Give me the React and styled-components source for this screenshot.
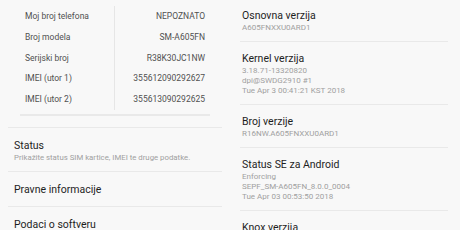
import styled, { createGlobalStyle } from "styled-components"

const GlobalStyle = createGlobalStyle`
  html, body {
    margin: 0;
    padding: 0;
    background: #f8f8f8;
  }
  body {
    font-family: Roboto, "Liberation Sans", sans-serif;
    -webkit-font-smoothing: antialiased;
  }
`

const Screen = styled.div`
  display: grid;
  grid-template-columns: 230px 230px;
  width: 460px;
  height: 230px;
  overflow: hidden;
  background: #f8f8f8;
`

const Panel = styled.div`
  display: flex;
  flex-direction: column;
`

const InfoCard = styled.div`
  margin: 0 20px;
  padding: 6px 0 4px;
  border-bottom: 2px solid #e9e9e9;
`

const InfoRow = styled.div`
  display: grid;
  grid-template-columns: 94px 1fr;
  height: 20.75px;
  align-items: center;
  font-size: 8.5px;
  color: #505050;
`

const InfoLabel = styled.span`
  padding-left: 5px;
  line-height: 20.75px;
`

const InfoValue = styled.span`
  text-align: right;
  padding-right: 5px;
  line-height: 20.75px;
  border-left: 1.5px solid #e6e6e6;
`

const List = styled.div`
  display: flex;
  flex-direction: column;
  margin: ${(p) => p.$margin};
`

const Item = styled.div`
  padding: ${(p) => p.$padTop || 8.5}px 0 8.5px ${(p) => p.$indent}px;
  border-top: ${(p) => (p.$first ? "none" : "1px solid #e9e9e9")};
`

const Title = styled.div`
  font-size: 10.5px;
  line-height: 15px;
  color: #1e1e1e;
`

const Sub = styled.div`
  font-size: ${(p) => p.$size || 8}px;
  line-height: 10px;
  color: #a0a0a0;
  white-space: nowrap;
`

const info = [
  ["Moj broj telefona", "NEPOZNATO"],
  ["Broj modela", "SM-A605FN"],
  ["Serijski broj", "R38K30JC1NW"],
  ["IMEI (utor 1)", "355612090292627"],
  ["IMEI (utor 2)", "355613090292625"],
]

const leftItems = [
  { title: "Status", sub: ["Prikažite status SIM kartice, IMEI te druge podatke."] },
  { title: "Pravne informacije", sub: [] },
  { title: "Podaci o softveru", sub: [] },
]

const rightItems = [
  { title: "Osnovna verzija", sub: ["A605FNXXU0ARD1"] },
  {
    title: "Kernel verzija",
    sub: ["3.18.71-13320820", "dpi@SWDG2910 #1", "Tue Apr 3 00:41:21 KST 2018"],
  },
  { title: "Broj verzije", sub: ["R16NW.A605FNXXU0ARD1"] },
  {
    title: "Status SE za Android",
    sub: ["Enforcing", "SEPF_SM-A605FN_8.0.0_0004", "Tue Apr 03 00:53:50 2018"],
  },
  { title: "Knox verzija", sub: [] },
]

const App = () => {
  return (
    <>
      <GlobalStyle />
      <Screen>
        <Panel>
          <InfoCard>
            {info.map(([label, value]) => (
              <InfoRow key={label}>
                <InfoLabel>{label}</InfoLabel>
                <InfoValue>{value}</InfoValue>
              </InfoRow>
            ))}
          </InfoCard>
          <List $margin="11px 8px 0 8px">
            {leftItems.map((it) => (
              <Item key={it.title} $indent={6} $padTop={10}>
                <Title>{it.title}</Title>
                {it.sub.map((s) => (
                  <Sub key={s} $size={7.8}>{s}</Sub>
                ))}
              </Item>
            ))}
          </List>
        </Panel>
        <Panel>
          <List $margin="-1px 12px 0 10px">
            {rightItems.map((it, i) => (
              <Item key={it.title} $indent={2} $first={i === 0}>
                <Title>{it.title}</Title>
                {it.sub.map((s) => (
                  <Sub key={s}>{s}</Sub>
                ))}
              </Item>
            ))}
          </List>
        </Panel>
      </Screen>
    </>
  )
}

export default App
